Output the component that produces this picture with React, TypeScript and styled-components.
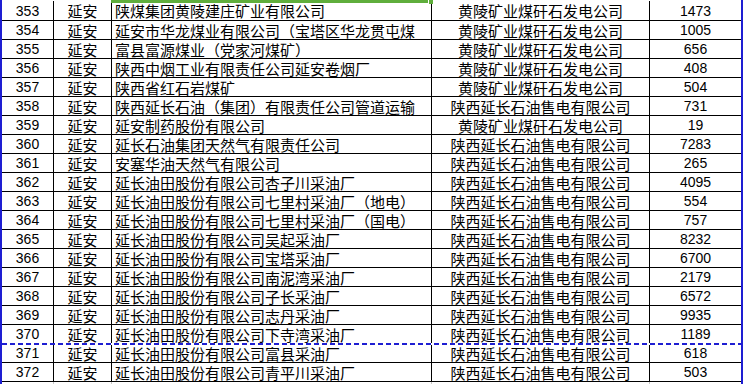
import React from "react";
import styled, { createGlobalStyle, css } from "styled-components";

const GlobalStyle = createGlobalStyle`
  html, body {
    margin: 0;
    padding: 0;
    background: #ffffff;
    overflow: hidden;
  }
  * { box-sizing: border-box; }
`;

const BLUE = "#1e1ed2";
const GREEN = "#5fae3c";

const Sheet = styled.div`
  position: relative;
  width: 743px;
  height: 384px;
  overflow: hidden;
  border-left: 2px solid ${BLUE};
  border-right: 2px solid ${BLUE};
  font-family: "Noto Sans CJK SC", "Noto Sans CJK JP", sans-serif;
  font-size: 15px;
  color: #000;
`;

const Row = styled.div<{ $first?: boolean; $pageBreak?: boolean; $outside?: boolean }>`
  position: relative;
  display: grid;
  grid-template-columns: 52px 58px 320px 218px 91px;
  height: ${(p) => (p.$first ? "21px" : "19px")};
  padding-top: ${(p) => (p.$first ? "1px" : "0")};
  border-bottom: 1px solid ${(p) => (p.$outside ? "#c8c8c8" : "#000")};
  ${(p) =>
    p.$pageBreak &&
    css`
      &::before {
        content: "";
        position: absolute;
        left: 0;
        right: 0;
        top: -1px;
        height: 2px;
        background: repeating-linear-gradient(
          to right,
          ${BLUE} 0 5px,
          #ffffff 5px 8px
        );
        z-index: 2;
      }
    `}
`;

const Cell = styled.div<{ $align?: "left" | "center"; $last?: boolean; $outside?: boolean }>`
  display: flex;
  align-items: center;
  justify-content: ${(p) => (p.$align === "left" ? "flex-start" : "center")};
  padding-left: ${(p) => (p.$align === "left" ? "3px" : "0")};
  border-right: ${(p) => (p.$last ? "none" : `1px solid ${p.$outside ? "#c8c8c8" : "#000"}`)};
  white-space: nowrap;
  overflow: hidden;
  line-height: 1;
`;

const NumText = styled.span`
  font-family: "Liberation Sans", "Noto Sans CJK SC", sans-serif;
  font-size: 14px;
`;

const SelectionBar = styled.div`
  position: absolute;
  top: 0;
  left: 109px;
  width: 317px;
  height: 3px;
  background: ${GREEN};
  z-index: 3;
`;

const FillHandle = styled.div`
  position: absolute;
  top: 0;
  left: 427px;
  width: 4px;
  height: 4px;
  background: ${GREEN};
  z-index: 3;
`;

type Rec = [number, string, string, string, number];

const data: Rec[] = [
  [353, "延安", "陕煤集团黄陵建庄矿业有限公司", "黄陵矿业煤矸石发电公司", 1473],
  [354, "延安", "延安市华龙煤业有限公司（宝塔区华龙贯屯煤", "黄陵矿业煤矸石发电公司", 1005],
  [355, "延安", "富县富源煤业（党家河煤矿）", "黄陵矿业煤矸石发电公司", 656],
  [356, "延安", "陕西中烟工业有限责任公司延安卷烟厂", "黄陵矿业煤矸石发电公司", 408],
  [357, "延安", "陕西省红石岩煤矿", "黄陵矿业煤矸石发电公司", 504],
  [358, "延安", "陕西延长石油（集团）有限责任公司管道运输", "陕西延长石油售电有限公司", 731],
  [359, "延安", "延安制药股份有限公司", "黄陵矿业煤矸石发电公司", 19],
  [360, "延安", "延长石油集团天然气有限责任公司", "陕西延长石油售电有限公司", 7283],
  [361, "延安", "安塞华油天然气有限公司", "陕西延长石油售电有限公司", 265],
  [362, "延安", "延长油田股份有限公司杏子川采油厂", "陕西延长石油售电有限公司", 4095],
  [363, "延安", "延长油田股份有限公司七里村采油厂（地电）", "陕西延长石油售电有限公司", 554],
  [364, "延安", "延长油田股份有限公司七里村采油厂（国电）", "陕西延长石油售电有限公司", 757],
  [365, "延安", "延长油田股份有限公司吴起采油厂", "陕西延长石油售电有限公司", 8232],
  [366, "延安", "延长油田股份有限公司宝塔采油厂", "陕西延长石油售电有限公司", 6700],
  [367, "延安", "延长油田股份有限公司南泥湾采油厂", "陕西延长石油售电有限公司", 2179],
  [368, "延安", "延长油田股份有限公司子长采油厂", "陕西延长石油售电有限公司", 6572],
  [369, "延安", "延长油田股份有限公司志丹采油厂", "陕西延长石油售电有限公司", 9935],
  [370, "延安", "延长油田股份有限公司下寺湾采油厂", "陕西延长石油售电有限公司", 1189],
  [371, "延安", "延长油田股份有限公司富县采油厂", "陕西延长石油售电有限公司", 618],
  [372, "延安", "延长油田股份有限公司青平川采油厂", "陕西延长石油售电有限公司", 503],
];

export default function App() {
  return (
    <>
      <GlobalStyle />
      <Sheet>
        <SelectionBar />
        <FillHandle />
        {data.map(([no, city, user, seller, amount], i) => (
          <Row key={no} $first={i === 0} $pageBreak={no === 371}>
            <Cell><NumText>{no}</NumText></Cell>
            <Cell>{city}</Cell>
            <Cell $align="left">{user}</Cell>
            <Cell>{seller}</Cell>
            <Cell $last><NumText>{amount}</NumText></Cell>
          </Row>
        ))}
        <Row $outside>
          <Cell $outside />
          <Cell $outside />
          <Cell $outside />
          <Cell $outside />
          <Cell $outside $last />
        </Row>
      </Sheet>
    </>
  );
}
